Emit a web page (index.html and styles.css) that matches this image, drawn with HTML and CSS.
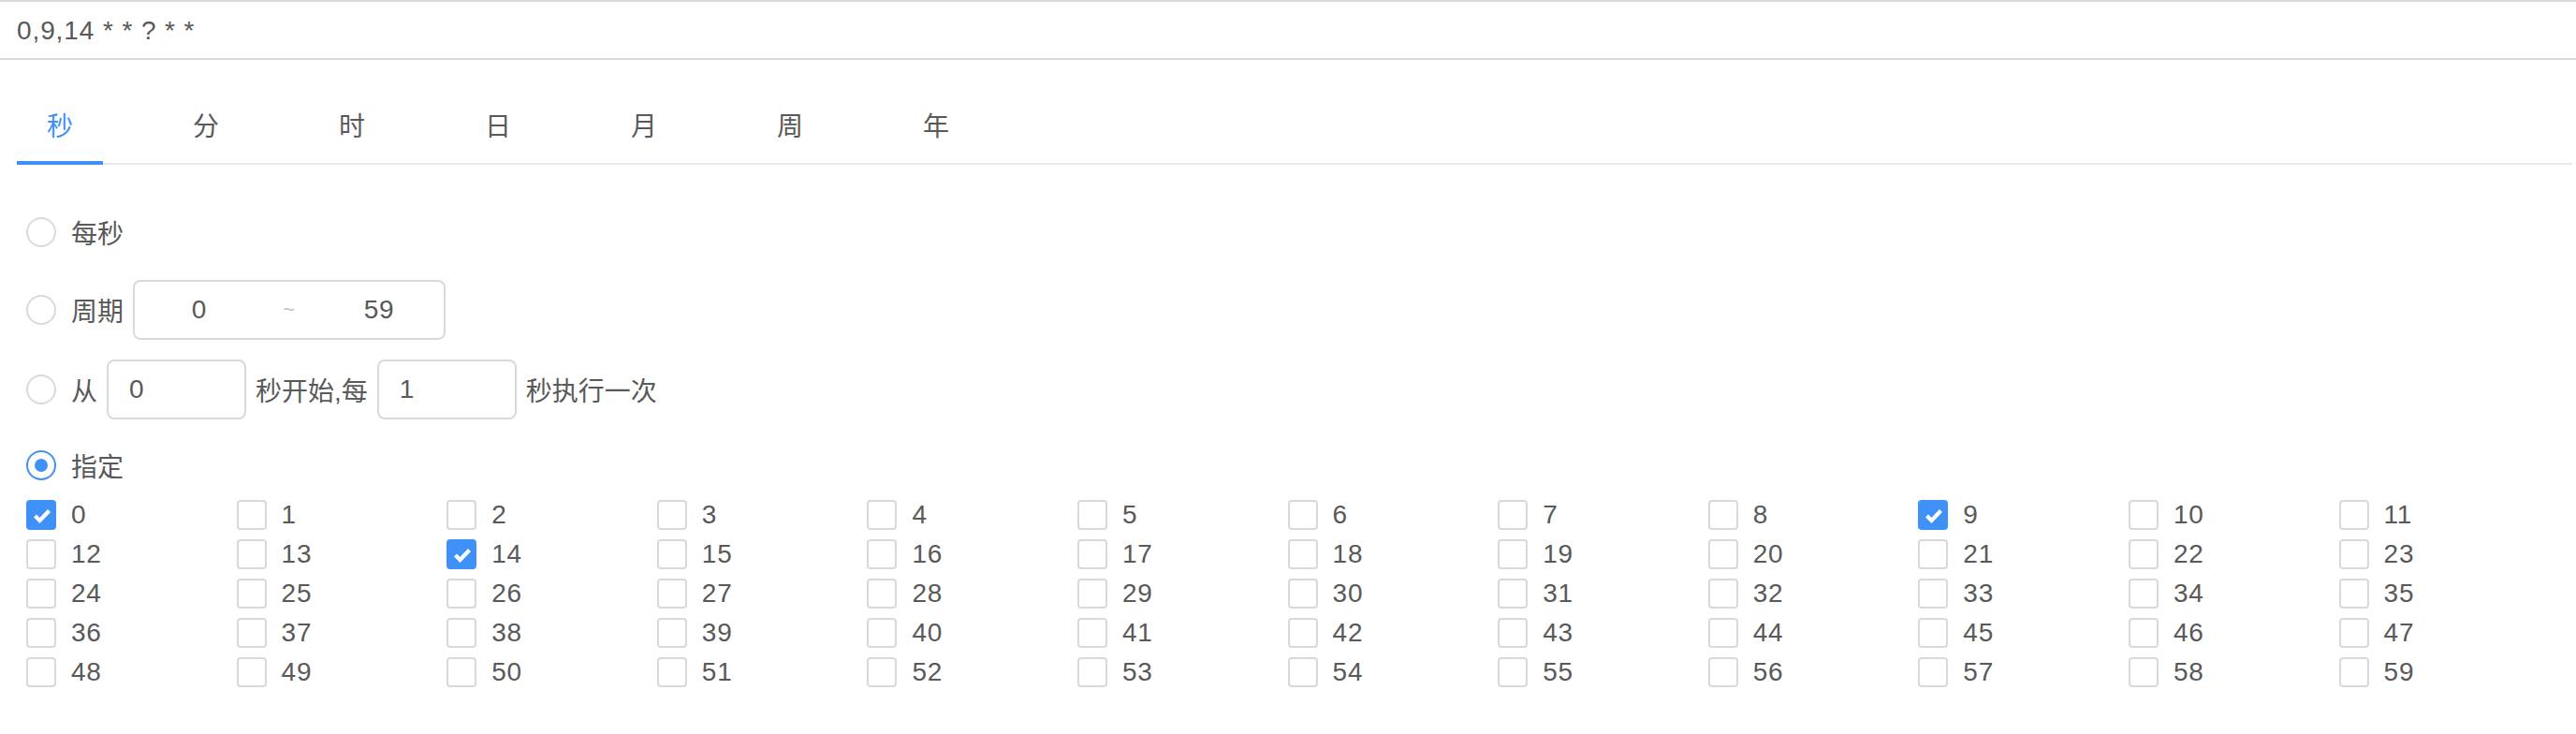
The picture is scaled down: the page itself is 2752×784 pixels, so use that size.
FILE: index.html
```html
<!DOCTYPE html>
<html lang="zh-CN">
<head>
<meta charset="utf-8">
<title>Cron</title>
<link rel="stylesheet" href="styles.css">
</head>
<body>
<div class="cron">
  <div class="expr">0,9,14 * * ? * *</div>
  <div class="tabs">
    <div class="tab-nav">
      <div class="tab active">秒</div>
      <div class="tab">分</div>
      <div class="tab">时</div>
      <div class="tab">日</div>
      <div class="tab">月</div>
      <div class="tab">周</div>
      <div class="tab">年</div>
    </div>
    <div class="pane">
      <div class="opt"><span class="radio"></span><span class="lbl">每秒</span></div>
      <div class="opt opt-range"><span class="radio"></span><span class="lbl">周期</span>
        <div class="range"><span class="rv">0</span><span class="sep">~</span><span class="rv">59</span></div>
      </div>
      <div class="opt opt-step"><span class="radio"></span><span class="lbl">从</span><span class="num">0</span><span class="lbl">秒开始,每</span><span class="num">1</span><span class="lbl">秒执行一次</span></div>
      <div class="opt opt-last"><span class="radio checked"></span><span class="lbl">指定</span></div>
      <div class="grid">
        <label class="ci"><span class="cb checked"><svg viewBox="0 0 28 28" width="28" height="28"><path d="M7.5 15 L12.5 20 L22.5 9.5" fill="none" stroke="#fff" stroke-width="4.2"/></svg></span>0</label>
        <label class="ci"><span class="cb"></span>1</label>
        <label class="ci"><span class="cb"></span>2</label>
        <label class="ci"><span class="cb"></span>3</label>
        <label class="ci"><span class="cb"></span>4</label>
        <label class="ci"><span class="cb"></span>5</label>
        <label class="ci"><span class="cb"></span>6</label>
        <label class="ci"><span class="cb"></span>7</label>
        <label class="ci"><span class="cb"></span>8</label>
        <label class="ci"><span class="cb checked"><svg viewBox="0 0 28 28" width="28" height="28"><path d="M7.5 15 L12.5 20 L22.5 9.5" fill="none" stroke="#fff" stroke-width="4.2"/></svg></span>9</label>
        <label class="ci"><span class="cb"></span>10</label>
        <label class="ci"><span class="cb"></span>11</label>
        <label class="ci"><span class="cb"></span>12</label>
        <label class="ci"><span class="cb"></span>13</label>
        <label class="ci"><span class="cb checked"><svg viewBox="0 0 28 28" width="28" height="28"><path d="M7.5 15 L12.5 20 L22.5 9.5" fill="none" stroke="#fff" stroke-width="4.2"/></svg></span>14</label>
        <label class="ci"><span class="cb"></span>15</label>
        <label class="ci"><span class="cb"></span>16</label>
        <label class="ci"><span class="cb"></span>17</label>
        <label class="ci"><span class="cb"></span>18</label>
        <label class="ci"><span class="cb"></span>19</label>
        <label class="ci"><span class="cb"></span>20</label>
        <label class="ci"><span class="cb"></span>21</label>
        <label class="ci"><span class="cb"></span>22</label>
        <label class="ci"><span class="cb"></span>23</label>
        <label class="ci"><span class="cb"></span>24</label>
        <label class="ci"><span class="cb"></span>25</label>
        <label class="ci"><span class="cb"></span>26</label>
        <label class="ci"><span class="cb"></span>27</label>
        <label class="ci"><span class="cb"></span>28</label>
        <label class="ci"><span class="cb"></span>29</label>
        <label class="ci"><span class="cb"></span>30</label>
        <label class="ci"><span class="cb"></span>31</label>
        <label class="ci"><span class="cb"></span>32</label>
        <label class="ci"><span class="cb"></span>33</label>
        <label class="ci"><span class="cb"></span>34</label>
        <label class="ci"><span class="cb"></span>35</label>
        <label class="ci"><span class="cb"></span>36</label>
        <label class="ci"><span class="cb"></span>37</label>
        <label class="ci"><span class="cb"></span>38</label>
        <label class="ci"><span class="cb"></span>39</label>
        <label class="ci"><span class="cb"></span>40</label>
        <label class="ci"><span class="cb"></span>41</label>
        <label class="ci"><span class="cb"></span>42</label>
        <label class="ci"><span class="cb"></span>43</label>
        <label class="ci"><span class="cb"></span>44</label>
        <label class="ci"><span class="cb"></span>45</label>
        <label class="ci"><span class="cb"></span>46</label>
        <label class="ci"><span class="cb"></span>47</label>
        <label class="ci"><span class="cb"></span>48</label>
        <label class="ci"><span class="cb"></span>49</label>
        <label class="ci"><span class="cb"></span>50</label>
        <label class="ci"><span class="cb"></span>51</label>
        <label class="ci"><span class="cb"></span>52</label>
        <label class="ci"><span class="cb"></span>53</label>
        <label class="ci"><span class="cb"></span>54</label>
        <label class="ci"><span class="cb"></span>55</label>
        <label class="ci"><span class="cb"></span>56</label>
        <label class="ci"><span class="cb"></span>57</label>
        <label class="ci"><span class="cb"></span>58</label>
        <label class="ci"><span class="cb"></span>59</label>
      </div>
    </div>
  </div>
</div>
</body>
</html>
```
FILE: styles.css
```css
* { box-sizing: border-box; }
html, body { margin: 0; padding: 0; background: #fff; }
body {
  font-family: "Liberation Sans", "Noto Sans CJK SC", sans-serif;
  font-size: 28px;
  color: #595959;
  width: 2752px;
}
.expr {
  height: 64px;
  border-top: 2px solid #d9d9d9;
  border-bottom: 2px solid #d9d9d9;
  padding-left: 18px;
  line-height: 61px;
  letter-spacing: 0.9px;
}
.tabs { margin: 0 4px 0 18px; }
.tab-nav {
  display: flex;
  gap: 64px;
  margin-top: 20px;
  border-bottom: 2px solid #e8e8e8;
}
.tab {
  position: relative;
  padding: 31px 32px 17px;
  line-height: 42px;
}
.tab.active { color: #4091f7; }
.tab.active::after {
  content: "";
  position: absolute;
  left: 0;
  right: 0;
  bottom: -2px;
  height: 4px;
  background: #4091f7;
}
.pane { padding: 40px 0 0 10px; }
.opt {
  display: flex;
  align-items: center;
  height: 64px;
  margin-bottom: 19px;
}
.opt-range { margin-bottom: 21px; }
.opt-step { margin-bottom: 17px; }
.opt-last { margin-bottom: 0; }
.radio {
  flex: none;
  width: 32px;
  height: 32px;
  border: 2px solid #d9d9d9;
  border-radius: 50%;
  margin-right: 16px;
  display: flex;
  align-items: center;
  justify-content: center;
}
.radio.checked { border-color: #4091f7; }
.radio.checked::after {
  content: "";
  width: 14px;
  height: 14px;
  border-radius: 50%;
  background: #4091f7;
}
.range {
  display: flex;
  align-items: center;
  width: 334px;
  height: 64px;
  border: 2px solid #d9d9d9;
  border-radius: 8px;
  margin-left: 10px;
  letter-spacing: 0.8px;
}
.range .rv { width: 138px; text-align: center; }
.range .sep { width: 54px; text-align: center; color: #bfbfbf; font-size: 22px; }
.num {
  display: flex;
  align-items: center;
  width: 149px;
  height: 64px;
  border: 2px solid #d9d9d9;
  border-radius: 8px;
  margin: 0 10px;
  padding: 0 22px;
}
.grid {
  display: grid;
  grid-template-columns: repeat(12, 224.6px);
  letter-spacing: 0.8px;
}
.ci {
  display: flex;
  align-items: center;
  height: 42px;
}
.cb {
  flex: none;
  width: 32px;
  height: 32px;
  border: 2px solid #d9d9d9;
  border-radius: 4px;
  margin-right: 16px;
  display: flex;
  align-items: center;
  justify-content: center;
}
.cb.checked { background: #4091f7; border-color: #4091f7; }
.cb svg { display: block; }
```
